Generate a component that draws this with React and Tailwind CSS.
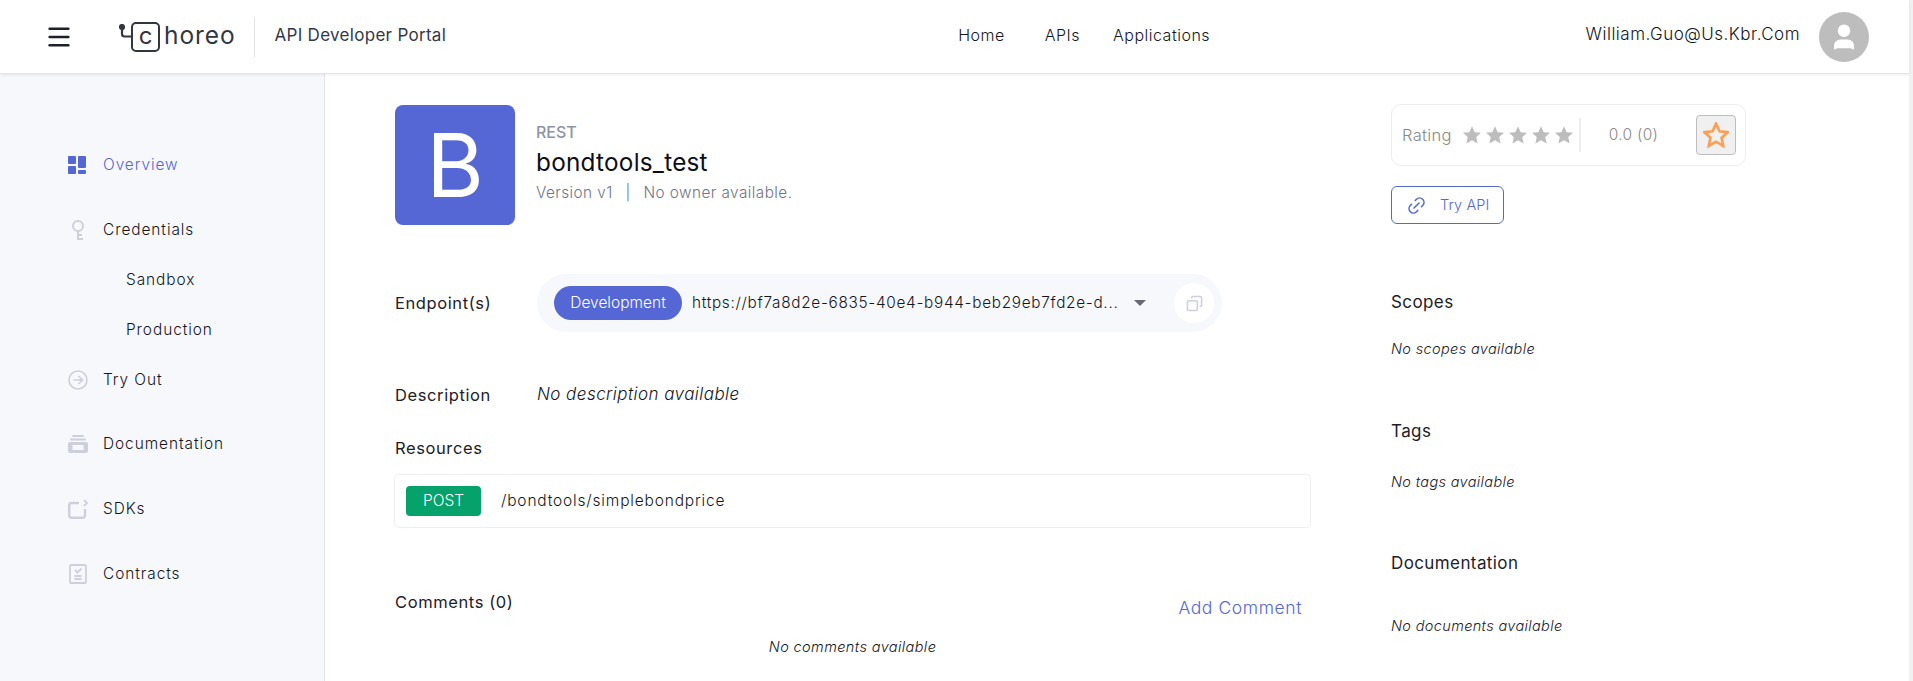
import { Menu, User, Link2, Copy } from 'lucide-react';

const FONT = "font-['Inter','Noto_Sans',sans-serif]";
const STAR = '12,1.500 15.200,8.600 22.800,9.400 17.100,14.500 18.700,22.100 12,18.200 5.300,22.100 6.900,14.500 1.200,9.400 8.800,8.600';

const OverviewIcon = () => (
  <svg width="18" height="18" viewBox="0 0 18 18" fill="#5567d5" className="ml-[1px]">
    <rect x="0" y="0" width="8" height="8" rx="1" />
    <rect x="0" y="10" width="8" height="8" rx="1" />
    <rect x="10" y="0" width="8" height="12" rx="1" />
    <rect x="10" y="14" width="8" height="4" rx="1" />
  </svg>
);

const KeyIcon = () => (
  <svg width="20" height="22" viewBox="0 0 20 22" fill="none" stroke="#cdd0dc" strokeWidth="2" className="ml-[2px]">
    <circle cx="9" cy="7" r="5" />
    <path d="M9 12v8h5M9 16h4" />
  </svg>
);

const TryOutIcon = () => (
  <svg width="20" height="20" viewBox="0 0 20 20" fill="none" stroke="#cdd0dc" strokeWidth="1.6" className="ml-[1px]">
    <circle cx="10" cy="10" r="9" />
    <path d="M5.5 10h8.5M10.5 6l4 4-4 4" />
  </svg>
);

const DocsIcon = () => (
  <svg width="20" height="18" viewBox="0 0 20 18" fill="#cdd0dc" className="ml-[1px]">
    <rect x="4" y="0" width="12" height="2" rx="1" />
    <rect x="2" y="3.500" width="16" height="2" rx="1" />
    <path d="M2 7h16a2 2 0 0 1 2 2v7a2 2 0 0 1-2 2H2a2 2 0 0 1-2-2V9a2 2 0 0 1 2-2zm2.500 3v5h11v-5z" fillRule="evenodd" />
  </svg>
);

const SdkIcon = () => (
  <svg width="20" height="20" viewBox="0 0 20 20" fill="none" stroke="#cdd0dc" strokeWidth="2.400" className="ml-[1px]">
    <path d="M11 4H3.500A2.500 2.500 0 0 0 1.200 6.500V16.500A2.500 2.500 0 0 0 3.500 18.800h11a2.500 2.500 0 0 0 2.500-2.300V10" />
    <path d="M16 1l3 3-3 3" strokeWidth="1.800" />
  </svg>
);

const ContractIcon = () => (
  <svg width="18" height="20" viewBox="0 0 18 20" fill="none" stroke="#cdd0dc" strokeWidth="1.800" className="ml-[2px]">
    <rect x="1" y="1" width="16" height="18" rx="1" />
    <path d="M6 6l2.500 2.500L12.500 4.500M5.500 12h7M5.500 15h7" />
  </svg>
);

const NavItem = ({ icon, label, active, className = '' }) => (
  <div className={`flex items-center h-[24px] ${className}`}>
    <span className="w-[36px] shrink-0 flex">{icon}</span>
    <span className={`text-[15.4px] font-light tracking-[0.95px] ${active ? 'text-[#5567d5]' : 'text-[#14161d]'}`}>{label}</span>
  </div>
);

const SideHeading = ({ className = '', children }) => (
  <h3 className={`text-[17px] tracking-[0.4px] text-[#1d2028] leading-[20px] ${className}`}>{children}</h3>
);

const Muted = ({ className = '', children }) => (
  <p className={`text-[14.5px] font-light italic tracking-[0.35px] text-[#1d2028] leading-[20px] ${className}`}>{children}</p>
);

const RowLabel = ({ className = '', children }) => (
  <span className={`text-[16.5px] tracking-[0.6px] text-[#1d2028] ${className}`}>{children}</span>
);

export default function App() {
  return (
    <div className={`${FONT} w-[1913px] h-[681px] overflow-hidden bg-[#f1f1f1] flex`}>
      <div className="w-[1909px] shrink-0 bg-white flex flex-col">
        <header className="h-[74px] shrink-0 bg-white border-b border-[#e4e3ee] shadow-[0_1px_3px_rgba(0,0,0,0.08)] relative z-10 flex items-center">
          <div className="w-[48px] ml-[46px] flex">
            <Menu size={28} strokeWidth={2.200} className="text-[#1d2028] -ml-[1px]" />
          </div>
          <div className="ml-[25px] flex items-center text-[#33363f]">
            <svg width="12" height="20" viewBox="0 0 12 20" fill="none" stroke="#33363f" strokeWidth="2.200" className="-mt-[5px]">
              <circle cx="3" cy="3" r="2" fill="#33363f" />
              <path d="M3 4v6a2.500 2.500 0 0 0 2.500 2.500H12" />
            </svg>
            <span className="w-[29px] h-[30px] mt-[1px] rounded-[5px] border-[2.500px] border-[#33363f] flex items-center justify-center text-[24px] leading-none pb-[3px]">c</span>
            <span className="text-[24.5px] tracking-[0.9px] ml-[4px] -mt-[2px]">horeo</span>
          </div>
          <div className="w-px h-[40px] bg-[#e3e4e8] ml-[19px]" />
          <span className="ml-[19px] text-[17px] tracking-[0.3px] text-[#33384a] -mt-[1px]">API Developer Portal</span>
          <nav className="ml-[512px] -mt-[3px] flex items-center text-[16px] font-light tracking-[0.5px] text-[#14161d]">
            <span>Home</span>
            <span className="ml-[40px]">APIs</span>
            <span className="ml-[33px]">Applications</span>
          </nav>
          <span className="ml-auto -mt-[3px] text-[17px] font-light tracking-[0.5px] text-[#14161d]">William.Guo@Us.Kbr.Com</span>
          <div className="ml-[19px] mr-[40px] w-[50px] h-[50px] rounded-full bg-[#bdbdbd] flex items-center justify-center">
            <User size={30} fill="white" stroke="white" strokeWidth={2} />
          </div>
        </header>

        <div className="flex-1 flex min-h-0">
          <aside className="w-[325px] shrink-0 bg-[#f7f8fc] border-r border-[#e3e4e8] pl-[67px] pt-[79px] flex flex-col">
            <NavItem icon={<OverviewIcon />} label="Overview" active />
            <NavItem icon={<KeyIcon />} label="Credentials" className="mt-[41px]" />
            <NavItem label="Sandbox" className="mt-[26px] ml-[23px]" />
            <NavItem label="Production" className="mt-[26px] ml-[23px]" />
            <NavItem icon={<TryOutIcon />} label="Try Out" className="mt-[26px]" />
            <NavItem icon={<DocsIcon />} label="Documentation" className="mt-[40px]" />
            <NavItem icon={<SdkIcon />} label="SDKs" className="mt-[41px]" />
            <NavItem icon={<ContractIcon />} label="Contracts" className="mt-[41px]" />
          </aside>

          <main className="flex-1 min-w-0 flex pl-[70px] pt-[31px]">
            <div className="w-[916px] shrink-0">
              <div className="flex">
                <div className="w-[120px] h-[120px] rounded-[8px] bg-[#5567d5] flex items-center justify-center text-white text-[88px] leading-none">B</div>
                <div className="ml-[21px] pt-[16px]">
                  <div className="text-[16px] font-medium text-[#8f93a3] leading-[22px]">REST</div>
                  <div className="text-[24.3px] tracking-[0.25px] text-[#0c0e14] leading-[32px] mt-[3px]">bondtools_test</div>
                  <div className="text-[15.300px] font-light tracking-[0.45px] text-[#70748a] leading-[20px] mt-[5px]">Version v1 <span className="mx-[8px]">|</span> No owner available.</div>
                </div>
              </div>

              <div className="flex items-center mt-[49px]">
                <RowLabel className="w-[142px]">Endpoint(s)</RowLabel>
                <div className="w-[685px] h-[58px] rounded-full bg-[#f7f8fc] flex items-center pl-[17px] pr-[8px]">
                  <span className="w-[128px] h-[34px] rounded-full bg-[#5567d5] text-white text-[15.5px] font-light flex items-center justify-center">Development</span>
                  <span className="ml-[10px] text-[15.300px] font-light tracking-[0.72px] text-[#14161d]">https://bf7a8d2e-6835-40e4-b944-beb29eb7fd2e-d...</span>
                  <span className="ml-[16px] w-0 h-0 border-x-[6px] border-x-transparent border-t-[6px] border-t-[#666a75]" />
                  <span className="ml-auto w-[40px] h-[40px] rounded-full bg-white flex items-center justify-center">
                    <Copy size={17} strokeWidth={2.200} className="text-[#cdd0dc] -scale-x-100" />
                  </span>
                </div>
              </div>

              <div className="flex items-center mt-[51px] h-[24px]">
                <RowLabel className="w-[142px]">Description</RowLabel>
                <span className="text-[17px] font-light italic tracking-[0.45px] text-[#14161d]">No description available</span>
              </div>

              <div className="mt-[29px] leading-[24px]"><RowLabel>Resources</RowLabel></div>
              <div className="mt-[14px] h-[54px] -ml-px rounded-[5px] border border-[#eeeef1] flex items-center pl-[11px]">
                <span className="w-[75px] h-[30px] rounded-[4px] bg-[#05a26b] text-white text-[15.5px] font-light flex items-center justify-center">POST</span>
                <span className="ml-[20px] text-[15.5px] font-light tracking-[0.82px] text-[#14161d]">/bondtools/simplebondprice</span>
              </div>

              <div className="mt-[62px] flex items-start justify-between pr-[9px]">
                <RowLabel className="leading-[24px]">Comments (0)</RowLabel>
                <span className="mt-[6px] text-[17.500px] font-light tracking-[0.6px] text-[#5567d5] leading-[24px]">Add Comment</span>
              </div>
              <div className="mt-[14px] text-center pr-[1px]">
                <span className="text-[14.5px] font-light italic tracking-[0.4px] text-[#14161d]">No comments available</span>
              </div>
            </div>

            <div className="ml-[80px] w-[355px] shrink-0 -mt-[1px]">
              <div className="h-[62px] rounded-[10px] border border-[#eeeef1] flex items-center pl-[10px] pr-[9px]">
                <span className="text-[16.5px] font-light tracking-[0.3px] text-[#8a8a8a]">Rating</span>
                <div className="ml-[10px] flex gap-[3px]">
                  {[0, 1, 2, 3, 4].map((i) => (
                    <svg key={i} width="20" height="20" viewBox="0 0 24 24" fill="#bdbdbd"><polygon points={STAR} /></svg>
                  ))}
                </div>
                <div className="ml-[5px] w-[2px] h-[34px] bg-[#eeeef1]" />
                <span className="ml-[28px] text-[15.5px] font-light tracking-[0.3px] text-[#8a8a8a]">0.0 (0)</span>
                <span className="ml-auto w-[40px] h-[40px] rounded-[4px] border border-[#bdbdbd] bg-[#f0f0f0] flex items-center justify-center">
                  <svg width="26" height="26" viewBox="0 0 24 24" fill="none" stroke="#ff9d52" strokeWidth="2.400"><polygon points={STAR} /></svg>
                </span>
              </div>
              <div className="mt-[20px] w-[113px] h-[38px] rounded-[6px] border border-[#5567d5] flex items-center pl-[14px] text-[#5567d5]">
                <Link2 size={21} strokeWidth={1.800} className="-rotate-45" />
                <span className="ml-[13px] text-[14.5px] font-light tracking-[0.1px]">Try API</span>
              </div>

              <SideHeading className="mt-[68px]">Scopes</SideHeading>
              <Muted className="mt-[27px]">No scopes available</Muted>
              <SideHeading className="mt-[62px]">Tags</SideHeading>
              <Muted className="mt-[31px]">No tags available</Muted>
              <SideHeading className="mt-[61px]">Documentation</SideHeading>
              <Muted className="mt-[43px]">No documents available</Muted>
            </div>
          </main>
        </div>
      </div>
    </div>
  );
}
